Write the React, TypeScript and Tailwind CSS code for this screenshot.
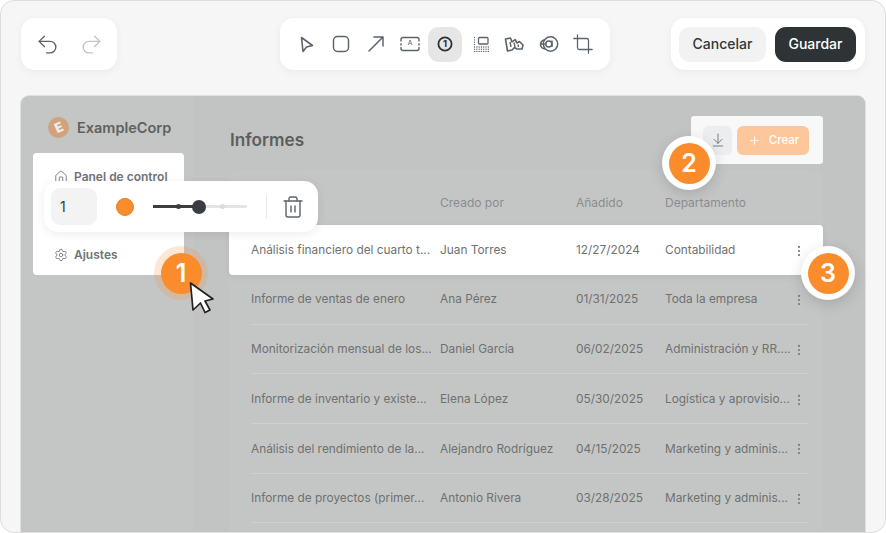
import { ArrowDownToLine, Crop, EllipsisVertical, House, LayoutList, Plus, Redo2, Settings, Trash2, Undo2 } from "lucide-react";

const rows = [
  { name: "Análisis financiero del cuarto t...", by: "Juan Torres", date: "12/27/2024", dept: "Contabilidad" },
  { name: "Informe de ventas de enero", by: "Ana Pérez", date: "01/31/2025", dept: "Toda la empresa" },
  { name: "Monitorización mensual de los...", by: "Daniel García", date: "06/02/2025", dept: "Administración y RR...." },
  { name: "Informe de inventario y existe...", by: "Elena López", date: "05/30/2025", dept: "Logística y aprovisio..." },
  { name: "Análisis del rendimiento de la...", by: "Alejandro Rodríguez", date: "04/15/2025", dept: "Marketing y adminis..." },
  { name: "Informe de proyectos (primer...", by: "Antonio Rivera", date: "03/28/2025", dept: "Marketing y adminis..." },
];

function SelectIcon() {
  return (
    <svg width="20" height="20" viewBox="0 0 20 20" fill="none" stroke="currentColor" strokeWidth="1.6" strokeLinejoin="round">
      <path d="M4.5 3.5 L15.5 11.5 L9.5 13 L6 17.5 Z" />
    </svg>
  );
}

function RectIcon() {
  return (
    <svg width="20" height="20" viewBox="0 0 20 20" fill="none" stroke="currentColor" strokeWidth="1.5">
      <rect x="2.5" y="2.5" width="15" height="15" rx="4" />
    </svg>
  );
}

function ArrowIcon() {
  return (
    <svg width="20" height="20" viewBox="0 0 20 20" fill="none" stroke="currentColor" strokeWidth="1.5" strokeLinecap="round" strokeLinejoin="round">
      <path d="M3 17 L17 3 M8 3 H17 V12" />
    </svg>
  );
}

function TextBoxIcon() {
  return (
    <svg width="22" height="20" viewBox="0 0 22 20" fill="none" stroke="currentColor" strokeWidth="1.4" strokeLinecap="round">
      <path d="M2 7 V5.5 Q2 3.5 4 3.5 H18 Q20 3.5 20 5.5 V7" />
      <path d="M2 9.7 V11 M20 9.7 V11" />
      <path d="M2 13.5 V14.5 Q2 16.5 4 16.5 H18 Q20 16.5 20 14.5 V13.5" />
      <text x="11" y="10.5" textAnchor="middle" fontSize="6.5" fontWeight="500" fill="currentColor" stroke="none" fontFamily="Inter, sans-serif">A</text>
    </svg>
  );
}

function NumberIcon() {
  return (
    <svg width="20" height="20" viewBox="0 0 20 20" fill="none" stroke="#2e3133" strokeWidth="1.8">
      <circle cx="10" cy="10" r="6.6" />
      <text x="10" y="13.4" textAnchor="middle" fontSize="9.5" fontWeight="700" fill="#2e3133" stroke="none" fontFamily="Inter, sans-serif">1</text>
    </svg>
  );
}

function BlurIcon() {
  return (
    <svg width="20" height="20" viewBox="0 0 20 20" fill="none" stroke="currentColor" strokeWidth="1.3" strokeLinecap="round">
      <rect x="8.5" y="3.5" width="9.5" height="6.5" rx="1" />
      <path d="M4.5 3.5 V10.5 M4.5 13 H18.5 M4.5 15.2 H18.5 M4.5 17.4 H18.5" strokeDasharray="0.1 2.2" />
    </svg>
  );
}

function ScribbleIcon() {
  return (
    <svg width="20" height="20" viewBox="0 0 20 20" fill="none" stroke="currentColor" strokeWidth="1.6" strokeLinejoin="round">
      <path d="M1.5 5 L6.5 4 L8 8 L11 5.5 L13 9 L15.5 7.5 L19 11 L18 15 L13 15 L10.5 13.5 L8 16 L3.5 17 Z" />
      <path d="M6 8 L7 13 M10 8.5 L11 13 M14 10.5 L14.5 13" strokeWidth="1.4" />
    </svg>
  );
}

function StickerIcon() {
  return (
    <svg width="20" height="20" viewBox="0 0 20 20" fill="none" stroke="currentColor" strokeWidth="1.5">
      <circle cx="11.5" cy="10" r="7.2" />
      <circle cx="9.8" cy="10" r="3" />
      <path d="M13 6.5 V13" />
      <path d="M6 5.5 Q1.5 7 1.5 10.5 Q1.5 14 6 15 M2 10 H6.5" />
    </svg>
  );
}

function CursorIcon() {
  return (
    <svg width="28" height="34" viewBox="0 0 28 34">
      <path d="M2.5 2 L25 18 L17 20 L22 29 L17 31.5 L12.5 22 L5 29 Z" fill="#fff" stroke="#222" strokeWidth="1.7" strokeLinejoin="round" />
    </svg>
  );
}

function Marker({ n, className }: { n: number; className: string }) {
  return (
    <div className={`absolute flex h-[54px] w-[54px] items-center justify-center rounded-full bg-white shadow-[0_4px_14px_rgba(0,0,0,0.14)] ${className}`}>
      <div className="flex h-[41px] w-[41px] items-center justify-center rounded-full bg-[#fb8c2b] text-[25px] font-semibold leading-none text-white">
        {n}
      </div>
    </div>
  );
}

function ToolButton({ children, active }: { children: React.ReactNode; active?: boolean }) {
  return (
    <div className={`flex h-[35px] w-[34.6px] items-center justify-center rounded-[11px] text-[#5d6469] ${active ? "bg-[#e6e6e6]" : ""}`}>
      {children}
    </div>
  );
}

export default function App() {
  return (
    <div className="relative flex h-[533px] w-[886px] flex-col overflow-hidden rounded-[14px] border border-[#dedede] bg-[#f6f6f6] px-5 pt-[17px] font-['Inter',sans-serif]">
      <div className="flex items-start">
        <div className="flex h-[52px] w-[96px] items-center justify-center gap-[19px] rounded-[14px] bg-white shadow-[0_2px_8px_rgba(0,0,0,0.05)]">
          <Undo2 size={25} strokeWidth={1.3} className="text-[#5d6469]" />
          <Redo2 size={25} strokeWidth={1.3} className="text-[#c2c4c6]" />
        </div>
        <div className="ml-[163px] flex h-[52px] w-[330px] items-center justify-center rounded-[14px] bg-white shadow-[0_2px_8px_rgba(0,0,0,0.05)]">
          <ToolButton><SelectIcon /></ToolButton>
          <ToolButton><RectIcon /></ToolButton>
          <ToolButton><ArrowIcon /></ToolButton>
          <ToolButton><TextBoxIcon /></ToolButton>
          <ToolButton active><NumberIcon /></ToolButton>
          <ToolButton><BlurIcon /></ToolButton>
          <ToolButton><ScribbleIcon /></ToolButton>
          <ToolButton><StickerIcon /></ToolButton>
          <ToolButton><Crop size={22} strokeWidth={1.4} /></ToolButton>
        </div>
        <div className="ml-[61px] flex h-[52px] w-[194px] items-center gap-[9px] rounded-[14px] bg-white pl-2 shadow-[0_2px_8px_rgba(0,0,0,0.05)]">
          <div className="flex h-[35px] w-[87px] items-center justify-center rounded-[11px] bg-[#f2f2f2] text-sm font-[450] text-[#33373a]">Cancelar</div>
          <div className="flex h-[35px] w-[81px] items-center justify-center rounded-[11px] bg-[#2e3336] text-sm font-[450] text-white">Guardar</div>
        </div>
      </div>

      <div className="mt-[26px] flex min-h-0 flex-1 overflow-hidden rounded-t-[8px] bg-[#c4c6c5] shadow-[0_0_0_1px_#e0e0e0]">
        <div className="flex w-[172px] shrink-0 flex-col pl-3">
          <div className="ml-[15px] mt-[21px] flex items-center gap-2">
            <div className="flex h-[21px] w-[21px] items-center justify-center rounded-full bg-[#d2a27c] text-[13px] font-extrabold leading-none text-[#eee]">
              <span className="-rotate-[25deg]">E</span>
            </div>
            <span className="text-[14.5px] font-semibold text-[#5f6161]">ExampleCorp</span>
          </div>
          <div className="mt-[14px] flex h-[122px] w-[151px] flex-col justify-between whitespace-nowrap rounded-[4px] bg-white pb-3 pl-[21px] pt-4 text-xs font-semibold text-[#717477]">
            <div className="flex items-center gap-[6px]"><House size={14} strokeWidth={1.5} />Panel de control</div>
            <div className="flex items-center gap-[6px]"><LayoutList size={14} strokeWidth={1.5} />Informes</div>
            <div className="flex items-center gap-[6px]"><Settings size={14} strokeWidth={1.5} />Ajustes</div>
          </div>
        </div>

        <div className="min-w-0 flex-1 bg-[#c2c4c3] pl-9 pr-[42px]">
          <div className="flex h-[74px] items-start justify-between">
            <h1 className="ml-px mt-[31px] text-[17.2px] font-semibold leading-[26px] text-[#5c5e5e]">Informes</h1>
            <div className="mt-5 flex h-12 w-[132px] items-center gap-[5px] rounded-[3px] bg-[#f8f8f8] pl-3">
              <div className="flex h-[29px] w-[29px] items-center justify-center rounded-[6px] bg-[#ecedee] text-[#6a6d70]">
                <ArrowDownToLine size={16} strokeWidth={1.3} />
              </div>
              <div className="flex h-[29px] w-[72px] items-center justify-center gap-[8px] rounded-[6px] bg-[#fdc79b] pl-px pt-px text-[11.5px] font-medium text-white">
                <Plus size={13} strokeWidth={1.6} />Crear
              </div>
            </div>
          </div>

          <div className="rounded-t-[12px] bg-[#c4c6c5]">
            <div className="grid h-[55px] grid-cols-[189px_136px_89px_126px] items-end pb-[14px] pl-[22px] text-xs text-[#8a8d8f]">
              <span>Nombre</span>
              <span>Creado por</span>
              <span>Añadido</span>
              <span>Departamento</span>
            </div>
            {rows.map((r, i) => (
              <div
                key={r.name}
                className={`pl-[22px] pr-[15px] text-[11.85px] ${
                  i === 0 ? "h-[50px] rounded-[4px] bg-white text-[#6f7172] shadow-[0_2px_6px_rgba(0,0,0,0.06)]" : "h-[49.7px] text-[#6f7171]"
                }`}
              >
                <div className={`grid h-full grid-cols-[189px_136px_89px_126px_1fr] items-center whitespace-nowrap pt-[2px] ${i === 0 ? "" : "border-b border-[#cfd1d0]"}`}>
                  <span>{r.name}</span>
                  <span>{r.by}</span>
                  <span>{r.date}</span>
                  <span>{r.dept}</span>
                  <EllipsisVertical size={14} strokeWidth={1.8} className="ml-px text-[#797c7f]" />
                </div>
              </div>
            ))}
            <div className="h-4" />
          </div>
        </div>
      </div>

      <div className="absolute left-[43px] top-[180px] flex h-[51px] w-[274px] items-center rounded-[14px] bg-white pl-[7px] shadow-[0_2px_10px_rgba(0,0,0,0.08)]">
        <div className="flex h-[37px] w-[46px] items-center rounded-[9px] bg-[#f3f3f3] pl-[9px] text-sm text-[#33373a]">1</div>
        <div className="ml-[19px] h-[18px] w-[18px] rounded-full border border-[#e67e22] bg-[#fb8c2b]" />
        <div className="relative ml-[19px] h-[3px] w-[94px] rounded-full bg-[#e4e4e4]">
          <div className="h-full w-[46px] bg-[#3a3e42]" />
          <div className="absolute left-[23px] top-[-1px] h-[5px] w-[5px] rounded-full bg-[#3a3e42]" />
          <div className="absolute left-[67px] top-[-1px] h-[5px] w-[5px] rounded-full bg-[#dcdcdc]" />
          <div className="absolute left-[39px] top-[-5.5px] h-[14px] w-[14px] rounded-full bg-[#3a3e42]" />
        </div>
        <div className="ml-[19px] h-[24px] w-px bg-[#e8e8e8]" />
        <Trash2 size={24} strokeWidth={1.4} className="ml-[14px] text-[#5d6469]" />
      </div>

      <div className="absolute left-[153px] top-[245px] flex h-[54px] w-[54px] items-center justify-center rounded-full bg-[#fb8c2b]/20">
        <div className="flex h-[41px] w-[41px] items-center justify-center rounded-full bg-[#fb8c2b] text-[25px] font-semibold leading-none text-white">1</div>
      </div>
      <div className="absolute left-[187px] top-[280px]"><CursorIcon /></div>
      <Marker n={2} className="left-[661px] top-[135px]" />
      <Marker n={3} className="left-[800px] top-[245px]" />
    </div>
  );
}
